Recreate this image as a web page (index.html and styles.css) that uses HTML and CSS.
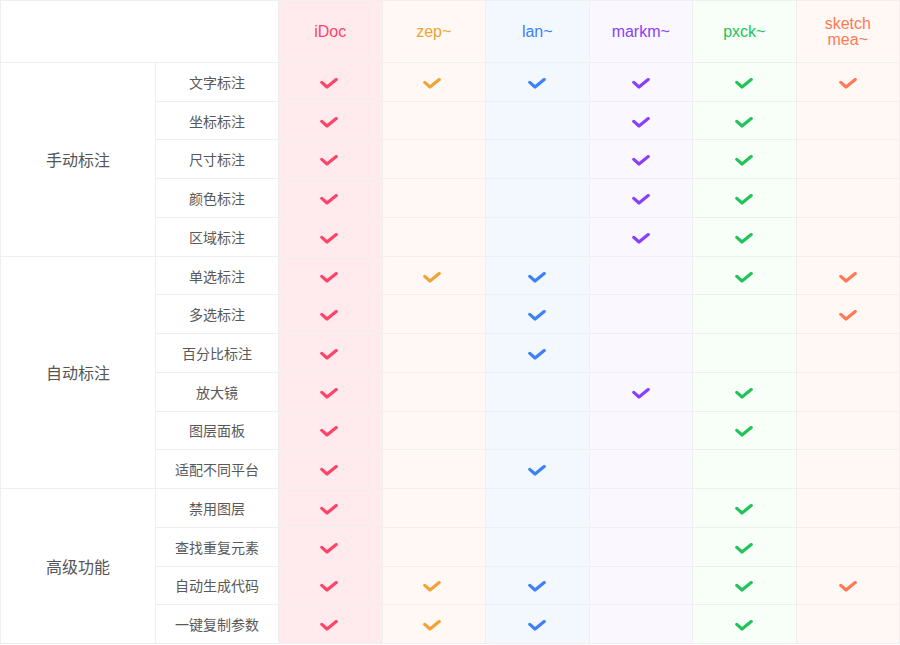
FILE: index.html
```html
<!DOCTYPE html>
<html lang="zh">
<head>
<meta charset="utf-8">
<link rel="stylesheet" href="styles.css">
</head>
<body>
<svg width="0" height="0" class="defs">
  <defs>
    <symbol id="chk" viewBox="0 0 18 11">
      <path d="M1.8 4.4 L7 9 L16.2 1.6" fill="none" stroke="currentColor" stroke-width="3.2" stroke-linecap="round" stroke-linejoin="round"/>
    </symbol>
  </defs>
</svg>
<div class="grid" id="grid">
  <div class="cell head blank"></div>
  <div class="cell head c1">iDoc</div>
  <div class="cell head c2">zep~</div>
  <div class="cell head c3">lan~</div>
  <div class="cell head c4">markm~</div>
  <div class="cell head c5">pxck~</div>
  <div class="cell head c6">sketch<br>mea~</div>
</div>
<script src="app.js"></script>
</body>
</html>
```
FILE: app.js
```js
const groups = [
  { name: "手动标注", rows: [
    ["文字标注", [1,1,1,1,1,1]],
    ["坐标标注", [1,0,0,1,1,0]],
    ["尺寸标注", [1,0,0,1,1,0]],
    ["颜色标注", [1,0,0,1,1,0]],
    ["区域标注", [1,0,0,1,1,0]]
  ]},
  { name: "自动标注", rows: [
    ["单选标注", [1,1,1,0,1,1]],
    ["多选标注", [1,0,1,0,0,1]],
    ["百分比标注", [1,0,1,0,0,0]],
    ["放大镜", [1,0,0,1,1,0]],
    ["图层面板", [1,0,0,0,1,0]],
    ["适配不同平台", [1,0,1,0,0,0]]
  ]},
  { name: "高级功能", rows: [
    ["禁用图层", [1,0,0,0,1,0]],
    ["查找重复元素", [1,0,0,0,1,0]],
    ["自动生成代码", [1,1,1,0,1,1]],
    ["一键复制参数", [1,1,1,0,1,0]]
  ]}
];
const grid = document.getElementById("grid");
let rowIdx = 2;
groups.forEach(g => {
  const gc = document.createElement("div");
  gc.className = "cell group";
  gc.textContent = g.name;
  gc.style.gridRow = rowIdx + " / span " + g.rows.length;
  gc.style.gridColumn = "1";
  grid.appendChild(gc);
  g.rows.forEach(([label, vals]) => {
    const lc = document.createElement("div");
    lc.className = "cell label";
    lc.textContent = label;
    lc.style.gridRow = rowIdx;
    grid.appendChild(lc);
    vals.forEach((v, i) => {
      const c = document.createElement("div");
      c.className = "cell data c" + (i + 1);
      c.style.gridRow = rowIdx;
      if (v) c.innerHTML = '<svg class="chk" width="18" height="11"><use href="#chk"/></svg>';
      grid.appendChild(c);
    });
    rowIdx++;
  });
});
```
FILE: styles.css
```css
html, body {
  margin: 0;
  padding: 0;
  background: #ffffff;
}
.defs {
  position: absolute;
  width: 0;
  height: 0;
}
.grid {
  display: grid;
  width: 900px;
  height: 644px;
  box-sizing: border-box;
  grid-template-columns: 155px 123px repeat(6, 1fr);
  grid-template-rows: 62px repeat(15, 1fr);
  border-top: 1px solid #efefef;
  border-left: 1px solid #efefef;
  font-family: "Liberation Sans", "Noto Sans CJK SC", sans-serif;
}
.cell {
  display: flex;
  align-items: center;
  justify-content: center;
  border-right: 1px solid #efefef;
  border-bottom: 1px solid #efefef;
  box-sizing: border-box;
  text-align: center;
}
.head {
  font-size: 16px;
  line-height: 16px;
  padding-top: 1px;
}
.blank {
  grid-column: 1 / span 2;
}
.group {
  font-family: "Noto Sans CJK SC", sans-serif;
  font-size: 16px;
  color: #555;
}
.label {
  grid-column: 2;
  font-family: "Noto Sans CJK SC", sans-serif;
  font-size: 14px;
  color: #595959;
}
.data {
  padding-top: 3px;
}
.chk {
  display: block;
  margin-left: -3px;
}
.c3 .chk, .c4 .chk, .c5 .chk, .c6 .chk {
  margin-left: 0;
}
.c1 { background: #ffebee; color: #ff4469; }
.c2 { background: #fff8f5; color: #f0a437; }
.c3 { background: #f3f8fe; color: #3e80f7; }
.c4 { background: #fbf7ff; color: #8a40f6; }
.c5 { background: #f7fff8; color: #24c35a; }
.c6 { background: #fff8f5; color: #ff7a54; }
```
